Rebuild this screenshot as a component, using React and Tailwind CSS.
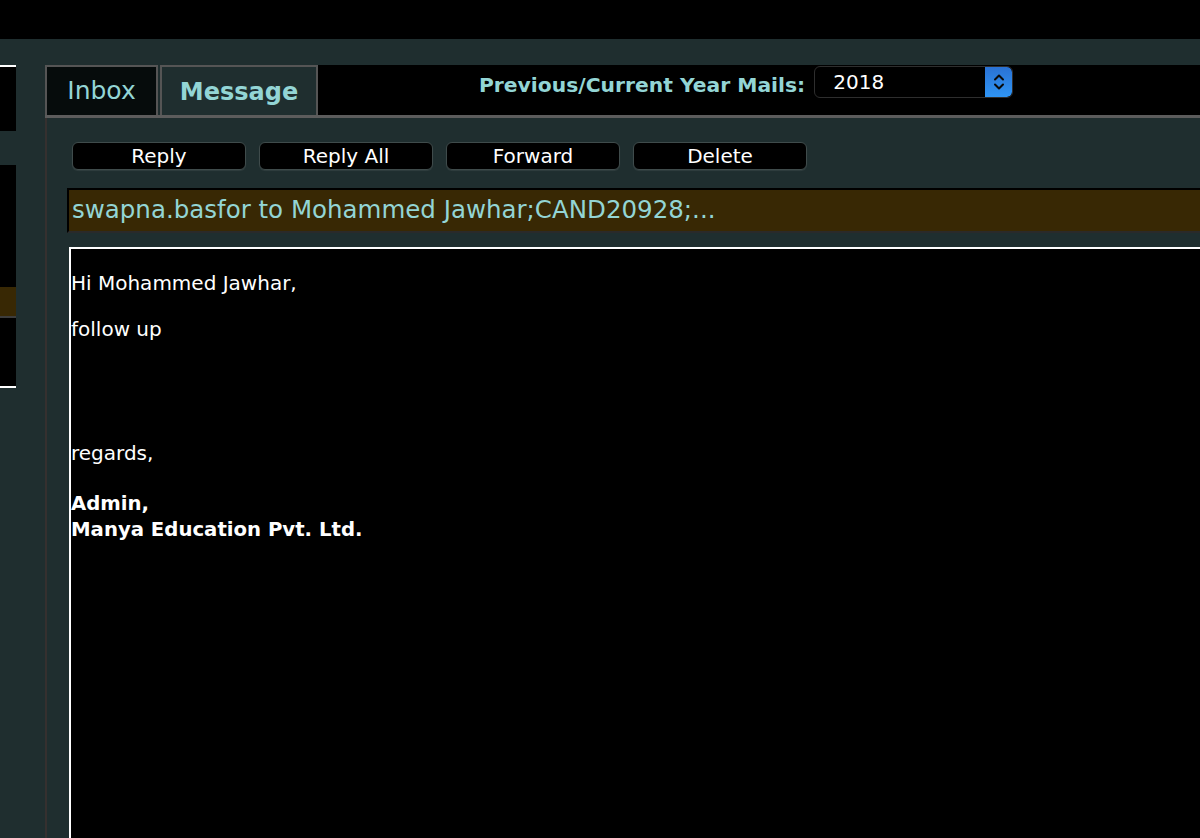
import React from "react"

const tealText = "text-[#93d5d5]"

const ActionButton = ({ children }) => (
  <button className="w-[174px] h-[28px] rounded-[6px] bg-black border border-[#3f4b4b] text-white text-[20px] leading-none shadow-[0_1px_1px_rgba(255,255,255,0.08)]">
    {children}
  </button>
)

const YearSelect = () => (
  <div className="flex items-stretch w-[199px] h-[32px] mt-[1px] rounded-[6px] border border-[#2e2e2e] bg-black overflow-hidden">
    <span className="flex-1 flex items-center pl-[18px] text-white text-[20px]">2018</span>
    <span className="w-[27px] flex items-center justify-center bg-gradient-to-b from-[#2a72d4] to-[#2f95f5] rounded-r-[5px]">
      <svg width="12" height="20" viewBox="0 0 12 20" fill="none" stroke="#0a0a0a" strokeWidth="2" strokeLinecap="round" strokeLinejoin="round">
        <path d="M2 7.5 L6 3.5 L10 7.5" />
        <path d="M2 12.5 L6 16.5 L10 12.5" />
      </svg>
    </span>
  </div>
)

export default function App() {
  return (
    <div className="w-[1200px] h-[838px] overflow-hidden bg-[#1f2e2f] font-['DejaVu_Sans',Verdana,sans-serif]">
      <div className="h-[39px] bg-black" />
      <div className="flex pt-[26px]">
        {/* left list, mostly off screen */}
        <div className="w-[16px] shrink-0">
          <div className="h-[66px] bg-black border-t-2 border-white" />
          <div className="h-[34px]" />
          <div className="h-[122px] bg-black" />
          <div className="h-[31px] bg-[#382804] border-b-2 border-[#3d3d3d]" />
          <div className="h-[70px] bg-black border-b-2 border-white" />
        </div>
        <div className="w-[29px] shrink-0" />

        {/* main panel */}
        <div className="flex-1 min-w-0 flex flex-col h-[773px]">
          <div className="flex shrink-0 h-[53px] border-b-[3px] border-[#5c5c5c]">
            <div className="w-[113px] flex items-center justify-center bg-[#060c0c] border-2 border-b-0 border-[#555]">
              <span className={`${tealText} text-[25px]`}>Inbox</span>
            </div>
            <div className="w-[158px] ml-[2px] flex items-center justify-center bg-[#1f2e2f] border-2 border-b-0 border-[#555]">
              <span className={`${tealText} text-[24px] font-bold mt-[2px]`}>Message</span>
            </div>
            <div className="flex-1 bg-black flex items-start pl-[161px]">
              <span className={`${tealText} text-[20.3px] font-bold mt-[5px] mr-[9px]`}>Previous/Current Year Mails:</span>
              <YearSelect />
            </div>
          </div>

          <div className="flex-1 border-l-2 border-[#35302f] pl-[20px]">
            <div className="flex gap-[13px] pt-[24px] pl-[5px]">
              <ActionButton>Reply</ActionButton>
              <ActionButton>Reply All</ActionButton>
              <ActionButton>Forward</ActionButton>
              <ActionButton>Delete</ActionButton>
            </div>

            <div className="mt-[18px] h-[45px] bg-[#382804] border-2 border-black border-b-[#2a2a2a] flex items-center pl-[3px] -mr-[10px]">
              <span className={`${tealText} text-[24.5px]`}>swapna.basfor to Mohammed Jawhar;CAND20928;...</span>
            </div>

            <div className="mt-[14px] ml-[2px] -mr-[10px] h-[620px] bg-black border-2 border-white text-white text-[20px] leading-[26px] pt-[21px]">
              <p>Hi Mohammed Jawhar,</p>
              <p className="mt-[20px]">follow up</p>
              <p className="mt-[98px]">regards,</p>
              <p className="mt-[25px] font-bold text-[19.7px]">Admin,</p>
              <p className="font-bold text-[19.7px]">Manya Education Pvt. Ltd.</p>
            </div>
          </div>
        </div>
      </div>
    </div>
  )
}
